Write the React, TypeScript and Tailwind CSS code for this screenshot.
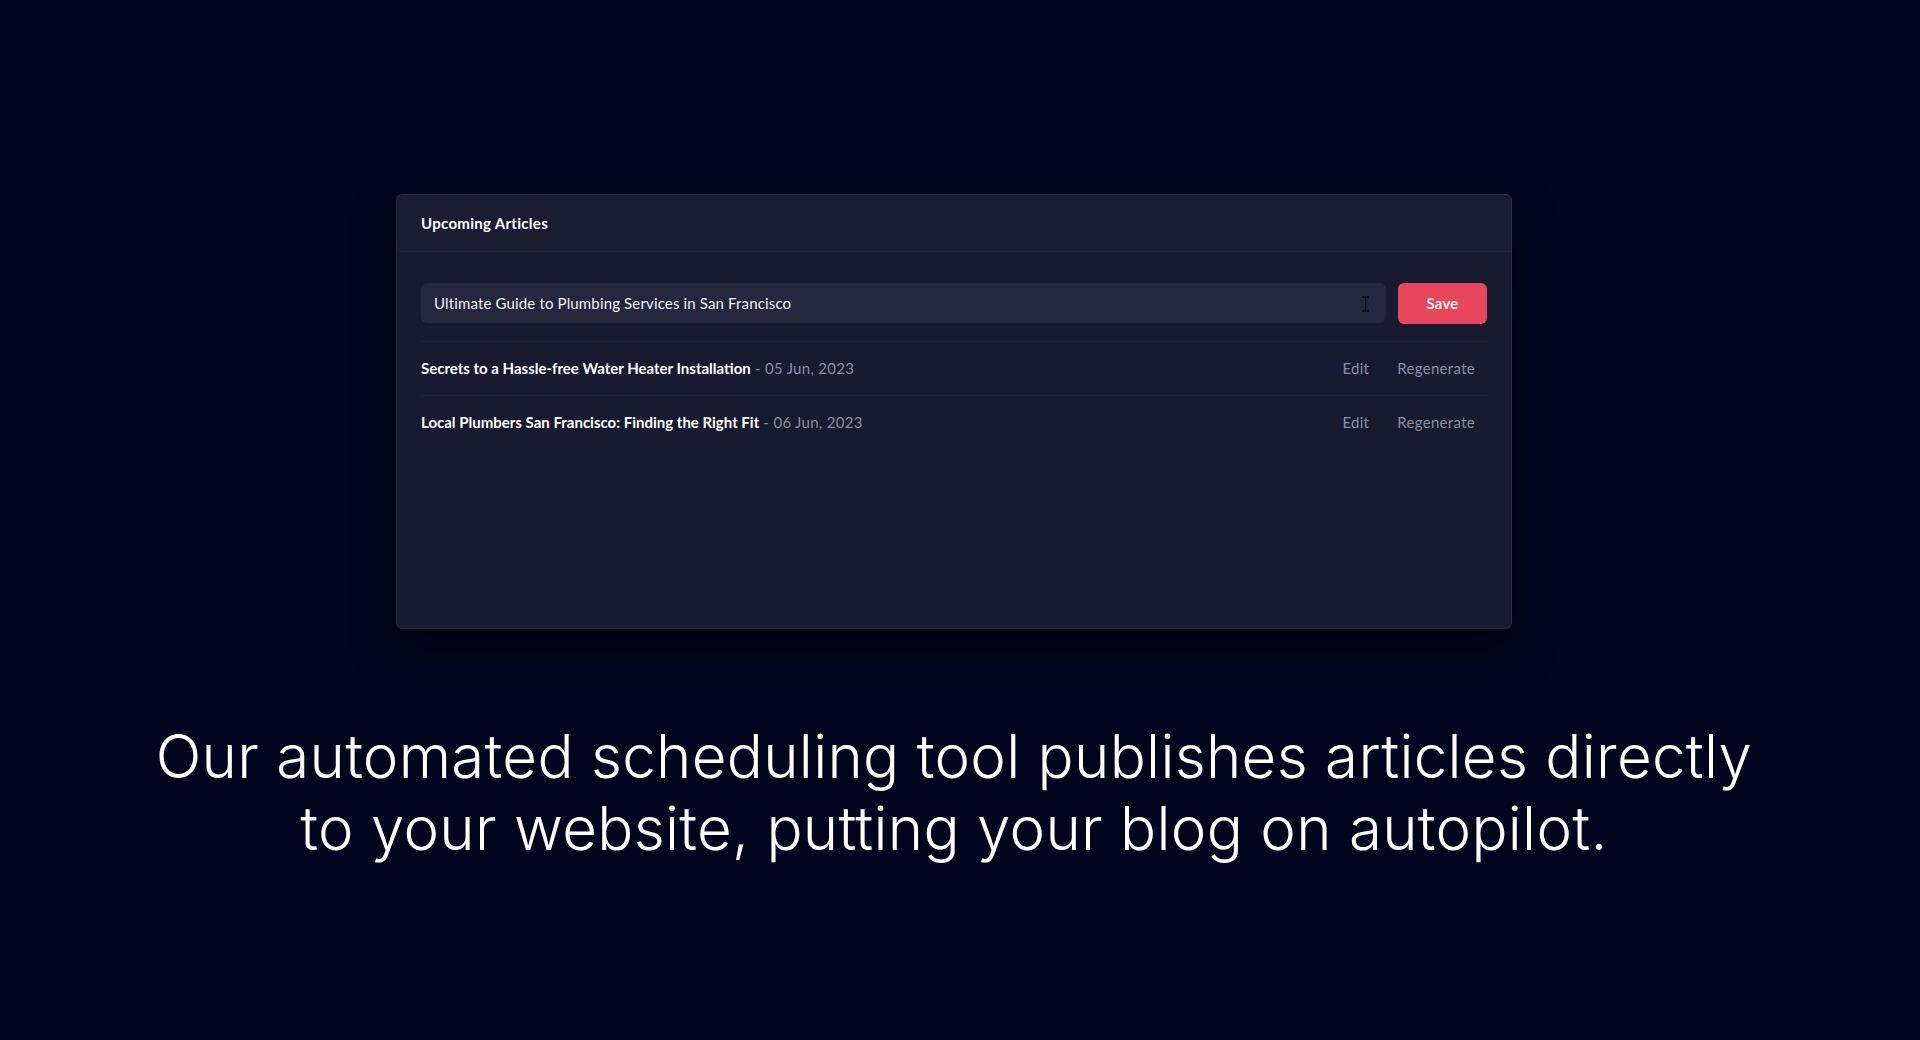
import React, { useState } from 'react'

interface Article {
    title: string;
    date: string;
}

const articles: Article[] = [
    { title: "Secrets to a Hassle-free Water Heater Installation", date: "05 Jun, 2023" },
    { title: "Local Plumbers San Francisco: Finding the Right Fit", date: "06 Jun, 2023" },
];

const IBeam = () => (
    <svg width="9" height="16" viewBox="0 0 9 16" className="absolute right-[16px] top-[13px]">
        <path d="M1 1h2.5c.6 0 1 .4 1 1v12c0 .6-.4 1-1 1H1M8 1H5.5c-.6 0-1 .4-1 1M8 15H5.5c-.6 0-1-.4-1-1" fill="none" stroke="#0c0c10" strokeWidth="1.3" />
    </svg>
)

export default function App() {
    const [value, setValue] = useState<string>("Ultimate Guide to Plumbing Services in San Francisco");

    return (
        <div className="min-h-[1040px] w-full bg-[#02041d] flex flex-col items-center pr-[12px] pt-[194px] font-['Lato',sans-serif]">
            <div className="w-[1116px] h-[435px] rounded-[6px] border border-[#2a2c3f] bg-[#181a2f] shadow-[0_20px_40px_rgba(0,0,0,0.55)] flex flex-col">
                <div className="h-[57px] flex items-center px-[24px] border-b border-[#1f2136] bg-[#1a1c31] rounded-t-[6px]">
                    <h2 className="text-[15px] font-bold tracking-[0.02em] text-white">Upcoming Articles</h2>
                </div>
                <div className="px-[24px] pt-[31px]">
                    <div className="flex gap-[12px]">
                        <div className="relative flex-1">
                            <input
                                value={value}
                                onChange={(e) => setValue(e.target.value)}
                                className="w-full h-[40px] rounded-[6px] bg-[#25273e] px-[13px] text-[15px] tracking-[0.01em] text-[#f1f1f5] outline-none"
                            />
                            <IBeam />
                        </div>
                        <button className="w-[89px] h-[41px] rounded-[6px] bg-[#e8465b] text-[15px] font-semibold tracking-[0.02em] text-white">
                            Save
                        </button>
                    </div>
                    <div className="mt-[17px]">
                        {articles.map((a) => (
                            <div key={a.title} className="h-[54px] flex items-center justify-between border-t border-[#1f2137]">
                                <div className="text-[15px]">
                                    <span className="font-bold text-white">{a.title}</span>
                                    <span className="text-[#8c8ea2] tracking-[0.02em]"> - {a.date}</span>
                                </div>
                                <div className="flex items-center gap-[4px] text-[15px] tracking-[0.02em] text-[#8b8da1]">
                                    <button className="px-[12px]">Edit</button>
                                    <button className="px-[12px]">Regenerate</button>
                                </div>
                            </div>
                        ))}
                    </div>
                </div>
            </div>
            <p className="mt-[91px] text-center text-white text-[60px] leading-[72px] font-light tracking-[0.005em] font-['Inter',sans-serif]">
                Our automated scheduling tool publishes articles directly
                <br />
                to your website, putting your blog on autopilot.
            </p>
        </div>
    )
}
